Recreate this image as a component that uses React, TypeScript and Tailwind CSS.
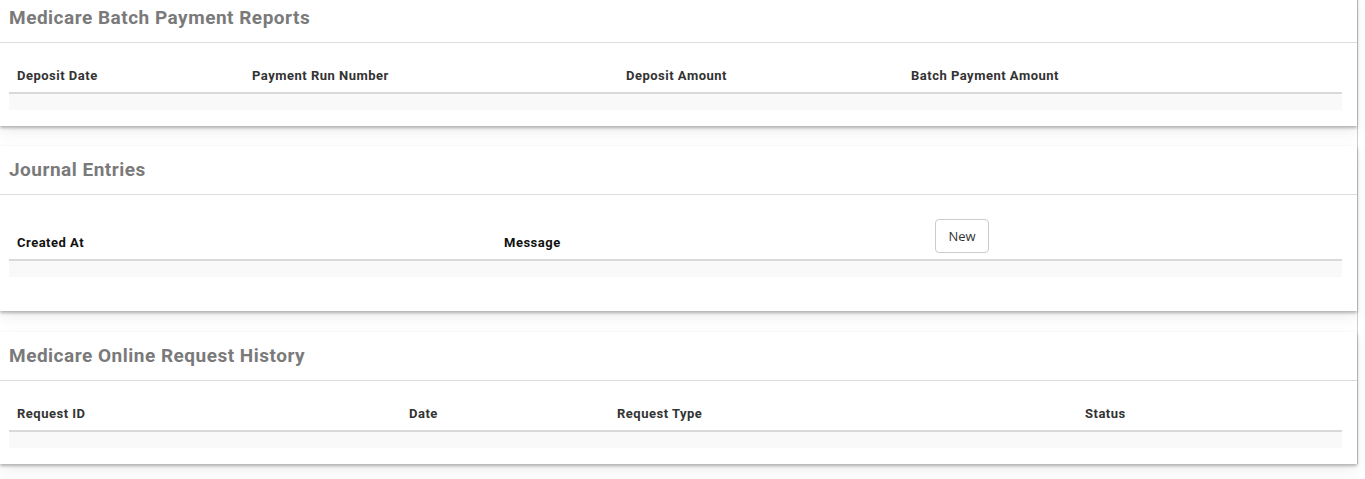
type Col = { label: string; width: string; node?: 'button' };

const cardShadow = 'shadow-[0_2px_3px_rgba(0,0,0,0.28),0_6px_14px_rgba(0,0,0,0.07)]';

function Panel({ title, cols, dark, extraBottom }: { title: string; cols: Col[]; dark?: boolean; extraBottom?: boolean }) {
  return (
    <section className={`bg-white ${cardShadow}`}>
      <div className="h-[49px] border-b border-[#dddddd] pl-[9px] pt-[14px]">
        <h2 className="text-[19px] leading-[20px] font-bold tracking-[0.5px] text-[#7a7a7a]">{title}</h2>
      </div>
      <div className={`pl-[9px] pr-[15px] pt-[16px] ${extraBottom ? 'pb-[34px]' : 'pb-[16px]'}`}>
        <table className="w-full border-collapse table-fixed">
          <thead>
            <tr className="border-b-2 border-[#d9d9d9]">
              {cols.map((c, i) => (
                <th
                  key={i}
                  className={`${c.width} px-[8px] pt-[8px] ${c.node === 'button' ? 'pb-[6px]' : 'pb-[8px]'} text-left align-bottom text-[13px] leading-[17px] font-bold tracking-[0.5px] ${dark ? 'text-[#111]' : 'text-[#333]'}`}
                >
                  {c.node === 'button' ? (
                    <button className="block h-[34px] w-[54px] rounded-[4px] border border-[#cccccc] bg-white text-[13px] tracking-normal text-[#333] font-normal font-['Open_Sans',sans-serif]">
                      New
                    </button>
                  ) : (
                    c.label
                  )}
                </th>
              ))}
            </tr>
          </thead>
          <tbody>
            <tr className="bg-[#f9f9f9]">
              <td colSpan={cols.length} className="h-[17px] p-0"></td>
            </tr>
          </tbody>
        </table>
      </div>
    </section>
  );
}

export default function App() {
  return (
    <div className="min-h-[479px] overflow-hidden bg-white font-['Roboto',sans-serif]">
      <div className="-mt-[6px] w-[1358px] border-r border-[#cfcfcf] flex flex-col">
        <Panel
          title="Medicare Batch Payment Reports"
          cols={[
            { label: 'Deposit Date', width: 'w-[235px]' },
            { label: 'Payment Run Number', width: 'w-[374px]' },
            { label: 'Deposit Amount', width: 'w-[285px]' },
            { label: 'Batch Payment Amount', width: '' },
          ]}
        />
        <div className="h-[20px]" />
        <Panel
          title="Journal Entries"
          dark
          extraBottom
          cols={[
            { label: 'Created At', width: 'w-[487px]' },
            { label: 'Message', width: 'w-[431px]' },
            { label: '', width: '', node: 'button' },
          ]}
        />
        <div className="h-[21px]" />
        <Panel
          title="Medicare Online Request History"
          cols={[
            { label: 'Request ID', width: 'w-[392px]' },
            { label: 'Date', width: 'w-[208px]' },
            { label: 'Request Type', width: 'w-[468px]' },
            { label: 'Status', width: '' },
          ]}
        />
      </div>
    </div>
  );
}
